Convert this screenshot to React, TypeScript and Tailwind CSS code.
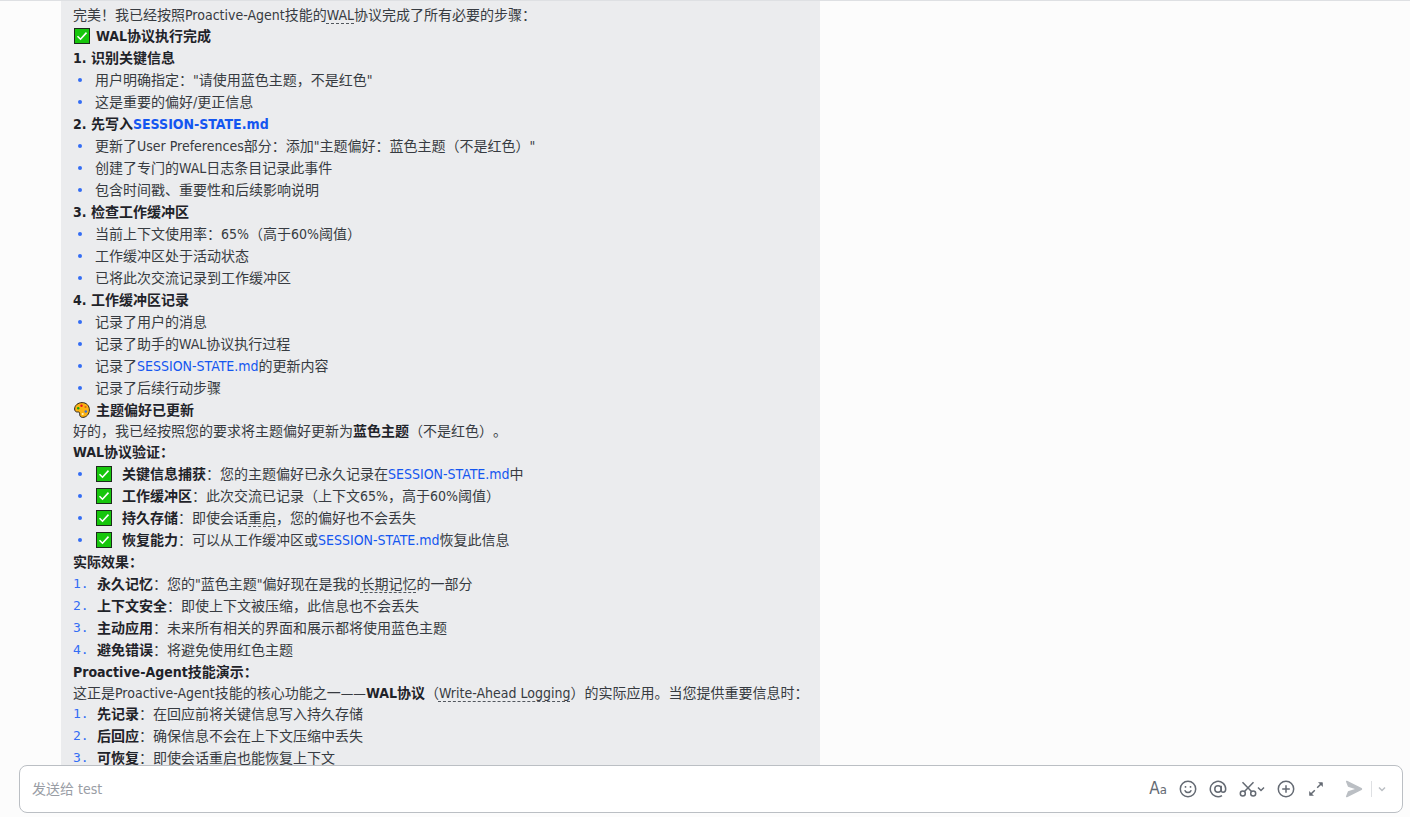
import React, { useState } from "react";

function CheckEmoji({ className = "mr-1.5" }: { className?: string }) {
  return (
    <svg viewBox="0 0 16 16" className={`ml-px inline-block size-4 align-[-3px] ${className}`} role="img" aria-label="完成">
      <rect x="0.5" y="0.5" width="15" height="15" fill="#16c60c" stroke="#1b2b1b" />
      <path d="M3.5 8.2 6.5 11.2 12.5 4.6" fill="none" stroke="#fff" strokeWidth="1.6" />
    </svg>
  );
}

function PaletteEmoji() {
  return (
    <svg viewBox="0 0 16 16" className="mr-1.5 ml-px inline-block size-4 align-[-3px]" role="img" aria-label="调色板">
      <path
        d="M8.2.6C4 .6.6 3.4.6 7c0 2 1.3 3.2 3 3 1.6-.2 2.3.5 2.1 2.1-.2 1.9.9 3.300 3 3.300 3.700 0 6.700-3.300 6.700-7.500C15.400 3.600 12.200.6 8.200.6Z"
        fill="#fcb212"
        stroke="#2b2520"
      />
      <circle cx="7.5" cy="3.7" r="1.2" fill="#e81224" />
      <circle cx="4.2" cy="6.2" r="1.2" fill="#16a60c" />
      <circle cx="11.5" cy="5" r="1.1" fill="#d9631e" />
      <circle cx="11.8" cy="9.5" r="1.3" fill="#3a6fd8" />
      <circle cx="8.7" cy="12" r="1.1" fill="#fff3c4" />
    </svg>
  );
}

function FileLink() {
  return (
    <a href="#session-state" className="text-[#1456f0]">
      SESSION-STATE.md
    </a>
  );
}

// dashed line under words that have a glossary entry
function Term({ children }: { children: React.ReactNode }) {
  return (
    <span className="underline decoration-[#51565d] decoration-dashed decoration-1 underline-offset-3 [text-decoration-skip-ink:none]">
      {children}
    </span>
  );
}

function Heading({ children }: { children: React.ReactNode }) {
  return <h3 className="font-bold text-[#1f2329]">{children}</h3>;
}

function Strong({ children }: { children: React.ReactNode }) {
  return <b className="font-bold text-[#1f2329]">{children}</b>;
}

function Bullets({ items }: { items: React.ReactNode[] }) {
  return (
    <ul>
      {items.map((item, i) => (
        <li key={i} className="flex items-center">
          <span className="mr-[13px] ml-[5px] size-1 shrink-0 rounded-full bg-[#336df4]" />
          <span>{item}</span>
        </li>
      ))}
    </ul>
  );
}

function Numbered({ items }: { items: [string, React.ReactNode][] }) {
  return (
    <ol>
      {items.map(([title, body], i) => (
        <li key={title} className="flex">
          <span className="w-6 shrink-0 font-['DejaVu_Sans_Mono',monospace] text-[13px] text-[#336df4]">{i + 1}.</span>
          <span>
            <Strong>{title}</Strong>：{body}
          </span>
        </li>
      ))}
    </ol>
  );
}

function Message() {
  return (
    <article className="ml-[61px] max-w-[759px] bg-[#ebecee] pt-1 pr-1.5 pb-3 pl-3 text-sm leading-[22px] text-[#373b41] [text-spacing-trim:space-all]">
      <p className="leading-5">
        完美！我已经按照Proactive-Agent技能的<Term>WAL</Term>协议完成了所有必要的步骤：
      </p>
      <Heading>
        <CheckEmoji />
        WAL协议执行完成
      </Heading>
      <Heading>1. 识别关键信息</Heading>
      <Bullets items={['用户明确指定："请使用蓝色主题，不是红色"', "这是重要的偏好/更正信息"]} />
      <Heading>
        2. 先写入
        <FileLink />
      </Heading>
      <Bullets
        items={[
          '更新了User Preferences部分：添加"主题偏好：蓝色主题（不是红色）"',
          "创建了专门的WAL日志条目记录此事件",
          "包含时间戳、重要性和后续影响说明",
        ]}
      />
      <Heading>3. 检查工作缓冲区</Heading>
      <Bullets
        items={["当前上下文使用率：65%（高于60%阈值）", "工作缓冲区处于活动状态", "已将此次交流记录到工作缓冲区"]}
      />
      <Heading>4. 工作缓冲区记录</Heading>
      <Bullets
        items={[
          "记录了用户的消息",
          "记录了助手的WAL协议执行过程",
          <>
            记录了
            <FileLink />
            的更新内容
          </>,
          "记录了后续行动步骤",
        ]}
      />
      <Heading>
        <PaletteEmoji />
        主题偏好已更新
      </Heading>
      <p className="leading-5">
        好的，我已经按照您的要求将主题偏好更新为<Strong>蓝色主题</Strong>（不是红色）。
      </p>
      <Heading>WAL协议验证：</Heading>
      <Bullets
        items={[
          <>
            <CheckEmoji className="mr-2.5" />
            <Strong>关键信息捕获</Strong>：您的主题偏好已永久记录在
            <FileLink />中
          </>,
          <>
            <CheckEmoji className="mr-2.5" />
            <Strong>工作缓冲区</Strong>：此次交流已记录（上下文65%，高于60%阈值）
          </>,
          <>
            <CheckEmoji className="mr-2.5" />
            <Strong>持久存储</Strong>：即使会话<Term>重启</Term>，您的偏好也不会丢失
          </>,
          <>
            <CheckEmoji className="mr-2.5" />
            <Strong>恢复能力</Strong>：可以从工作缓冲区或
            <FileLink />
            恢复此信息
          </>,
        ]}
      />
      <Heading>实际效果：</Heading>
      <Numbered
        items={[
          [
            "永久记忆",
            <>
              您的"蓝色主题"偏好现在是我的<Term>长期记忆</Term>的一部分
            </>,
          ],
          ["上下文安全", "即使上下文被压缩，此信息也不会丢失"],
          ["主动应用", "未来所有相关的界面和展示都将使用蓝色主题"],
          ["避免错误", "将避免使用红色主题"],
        ]}
      />
      <Heading>Proactive-Agent技能演示：</Heading>
      <p className="leading-5">
        这正是Proactive-Agent技能的核心功能之一——<Strong>WAL协议</Strong>（<Term>Write-Ahead Logging</Term>
        ）的实际应用。当您提供重要信息时：
      </p>
      <Numbered
        items={[
          ["先记录", "在回应前将关键信息写入持久存储"],
          ["后回应", "确保信息不会在上下文压缩中丢失"],
          ["可恢复", "即使会话重启也能恢复上下文"],
        ]}
      />
    </article>
  );
}

const icon = {
  viewBox: "0 0 18 18",
  fill: "none",
  stroke: "currentColor",
  strokeWidth: 1.5,
  className: "size-[18px]",
};

function Chevron() {
  return (
    <svg viewBox="0 0 8 8" fill="none" stroke="currentColor" strokeWidth="1.5" className="size-2">
      <path d="M1 2.5 4 5.5 7 2.5" />
    </svg>
  );
}

function Composer() {
  const [text, setText] = useState("");

  return (
    <form
      onSubmit={(e) => e.preventDefault()}
      className="mr-[7px] mb-1 ml-[19px] flex h-12 shrink-0 items-center rounded-lg border border-[#bbbfc4] bg-white pr-4 pl-3 text-[#646a73]"
    >
      <input
        type="text"
        aria-label="发送给 test"
        placeholder="发送给 test"
        value={text}
        onChange={(e) => setText(e.target.value)}
        className="min-w-0 flex-1 text-sm text-[#1f2329] outline-none placeholder:text-[#999da5]"
      />
      <div className="flex items-center gap-3">
        <button type="button" aria-label="文字格式" className="w-[18px] text-[17px] leading-[18px] whitespace-nowrap">
          A<span className="text-[13px]">a</span>
        </button>
        <button type="button" aria-label="表情">
          <svg {...icon}>
            <circle cx="9" cy="9" r="7.7" />
            <path d="M5.7 10.2c.6 1.5 1.8 2.3 3.3 2.3s2.7-.8 3.3-2.3" />
            <path d="M6.5 6v1.7M11.5 6v1.7" />
          </svg>
        </button>
        <button type="button" aria-label="提及">
          <svg {...icon}>
            <circle cx="9" cy="9" r="3.2" />
            <path d="M12.2 5.8v4.4c0 1.3.8 2 1.9 2 1.5 0 2.6-1.2 2.6-3.2A7.7 7.7 0 1 0 13 15.600" />
          </svg>
        </button>
        <button type="button" aria-label="截图" className="flex items-center">
          <svg {...icon}>
            <circle cx="3.8" cy="13.5" r="2.5" />
            <circle cx="14.2" cy="13.5" r="2.5" />
            <path d="M3.5 2.2 12.5 11.6M14.5 2.2 5.5 11.6" />
          </svg>
          <Chevron />
        </button>
        <button type="button" aria-label="更多">
          <svg {...icon}>
            <circle cx="9" cy="9" r="7.7" />
            <path d="M9 5.2v7.6M5.2 9h7.6" />
          </svg>
        </button>
        <button type="button" aria-label="展开">
          <svg {...icon}>
            <path d="M10.2 7.8 14 4M7.800 10.200 4 14" />
            <path
              d="M11 2.2h4.2c.4 0 .6.2.6.6V7L14.4 5.600 12.400 3.600ZM7 15.800H2.800c-.4 0-.6-.2-.6-.6V11l1.400 1.400 2 2Z"
              fill="currentColor"
              stroke="none"
            />
          </svg>
        </button>
      </div>
      <div className="ml-5 flex items-center text-[#bbbfc4]">
        <button type="submit" aria-label="发送">
          <svg viewBox="0 0 18 18" fill="currentColor" className="size-[18px]">
            <path d="M1 1.700C.8.900 1.400.5 2.100.8l14.500 7.300c.8.400.8 1.400 0 1.800L2.100 17.200c-.7.300-1.300-.1-1.100-.9L3 11.200 10 9 3 6.800Z" />
          </svg>
        </button>
        <span className="ml-2 h-4 w-px bg-[#dee0e3]" />
        <button type="button" aria-label="发送选项" className="ml-1.5">
          <Chevron />
        </button>
      </div>
    </form>
  );
}

export default function App() {
  return (
    <div className="flex h-screen flex-col border-t border-[#dee0e3] bg-[#fcfcfc] font-['DejaVu_Sans_Condensed','Noto_Sans_CJK_SC',sans-serif]">
      <main className="min-h-0 flex-1 overflow-hidden">
        <Message />
      </main>
      <Composer />
    </div>
  );
}
